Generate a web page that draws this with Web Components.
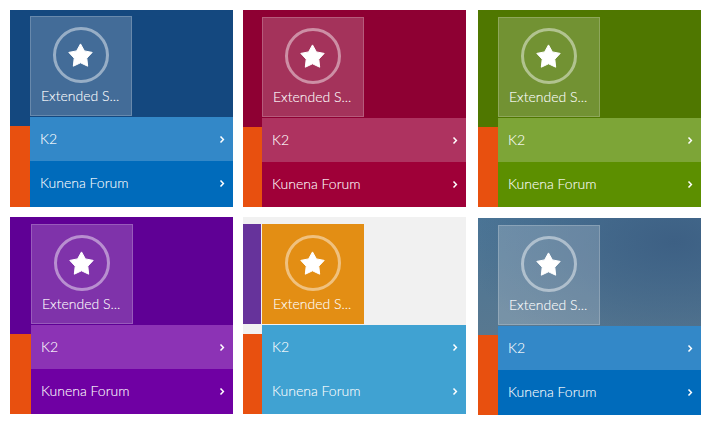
<!DOCTYPE html>
<html><head><meta charset="utf-8"><title>Menu themes</title>
<style>
html,body{margin:0;padding:0;background:#fff}
body{font-family:Lato,"Open Sans",sans-serif}
</style></head><body>
<theme-gallery>
<menu-panel style="--bg:#14487f;--rail:20px;--top:6px;--k2:#3388c8;--kun:#006bbb;--tile:rgba(255,255,255,.2);--tb:rgba(255,255,255,.2)"></menu-panel>
<menu-panel style="--bg:#8e0033;--rail:19px;--top:7px;--k2:#ae3360;--kun:#9f0038;--tile:rgba(255,255,255,.2);--tb:rgba(255,255,255,.2)"></menu-panel>
<menu-panel style="--bg:#4f7700;--rail:20px;--top:7px;--k2:#7da537;--kun:#5c8f00;--tile:rgba(255,255,255,.2);--tb:rgba(255,255,255,.2)"></menu-panel>
<menu-panel style="--bg:#5f0095;--rail:21px;--top:7px;--k2:#8c33b5;--kun:#6f00a3;--tile:rgba(255,255,255,.2);--tb:rgba(255,255,255,.2)"></menu-panel>
<menu-panel style="--bg:#f1f1f1;--rail:19px;--top:7px;--k2:#40a2d2;--kun:#40a2d2;--tile:#e38e14;--tb:#e38e14;--stripe:#66339b;--stripe-gap:1px"></menu-panel>
<menu-panel style="--bg:radial-gradient(ellipse 210px 120px at 88% 12%,#3d6084 0%,rgba(61,96,132,0) 100%),linear-gradient(#4b7596 0%,#587890 60%,#5f7a8e 100%);--rail:20px;--top:7px;--k2:#3388c8;--kun:#006bbb;--tile:rgba(255,255,255,.2);--tb:rgba(255,255,255,.2);--mt:1px"></menu-panel>
</theme-gallery>
<script>
class ThemeGallery extends HTMLElement{
  constructor(){super();this.attachShadow({mode:'open'}).innerHTML=`<style>
  :host{display:grid;grid-template-columns:233px 235px 223px;grid-auto-rows:207px;padding:10px 0 0 10px}
  </style><slot></slot>`;}
}
class MenuRow extends HTMLElement{
  constructor(){super();this.attachShadow({mode:'open'}).innerHTML=`<style>
  :host{display:block;color:#fff;font:300 14px/20px Lato,sans-serif;-webkit-text-stroke:.08px #fff}
  .in{height:44px;display:flex;align-items:center;justify-content:space-between;padding:0 8px 0 10px}
  svg{display:block;width:6px;height:9px}
  </style><div class="in"><span><slot></slot></span><svg viewBox="0 0 6 9"><path d="M1.5 1.4 4.4 4.5 1.5 7.6" fill="none" stroke="#fff" stroke-width="1.5"/></svg></div>`;}
}
class StarTile extends HTMLElement{
  constructor(){super();this.attachShadow({mode:'open'}).innerHTML=`<style>
  :host{display:flex;flex-direction:column;box-sizing:border-box;width:102px;height:100px;background:var(--tile);border:1px solid var(--tb);padding:10px 10px 0;color:#fff}
  .ring{box-sizing:border-box;width:56px;height:56px;border:3px solid rgba(255,255,255,.45);border-radius:50%;margin:0 auto;display:flex;align-items:center;justify-content:center}
  svg{display:block;width:26px;height:25px}
  .t{margin-top:3px;font:300 14px/20px Lato,sans-serif;white-space:nowrap;-webkit-text-stroke:.08px #fff}
  </style><div class="ring"><svg viewBox="0.5 0 26 25"><path d="M13 .9 16.9 7.9 24.7 9.4 19.3 15.2 20.2 23.2 13 19.8 5.8 23.2 6.7 15.2 1.3 9.4 9.1 7.9Z" fill="#fff" stroke="#fff" stroke-width="1" stroke-linejoin="round"/></svg></div><div class="t">Extended S...</div>`;}
}
class MenuPanel extends HTMLElement{
  constructor(){super();this.attachShadow({mode:'open'}).innerHTML=`<style>
  :host{display:flex;box-sizing:border-box;width:223px;height:197px;margin-top:var(--mt,0);background:var(--bg)}
  .rail{width:var(--rail);flex:none;display:flex;flex-direction:column;padding-top:var(--top)}
  .stripe{flex:none;height:100px;width:calc(100% - var(--stripe-gap,0px));background:var(--stripe,transparent)}
  .orange{flex:1;margin-top:10px;background:#e8500f}
  .main{flex:1;display:flex;flex-direction:column;padding-top:var(--top);min-width:0}
  star-tile{flex:none}
  .rows{margin-top:1px;flex:1;display:flex;flex-direction:column}
  .k2{flex:none;background:var(--k2)}
  .kun{flex:1;background:var(--kun)}
  </style>
  <div class="rail"><div class="stripe"></div><div class="orange"></div></div>
  <div class="main"><star-tile></star-tile><div class="rows"><menu-row class="k2">K2</menu-row><menu-row class="kun">Kunena Forum</menu-row></div></div>`;}
}
customElements.define('theme-gallery',ThemeGallery);
customElements.define('menu-row',MenuRow);
customElements.define('star-tile',StarTile);
customElements.define('menu-panel',MenuPanel);
</script>
</body></html>
